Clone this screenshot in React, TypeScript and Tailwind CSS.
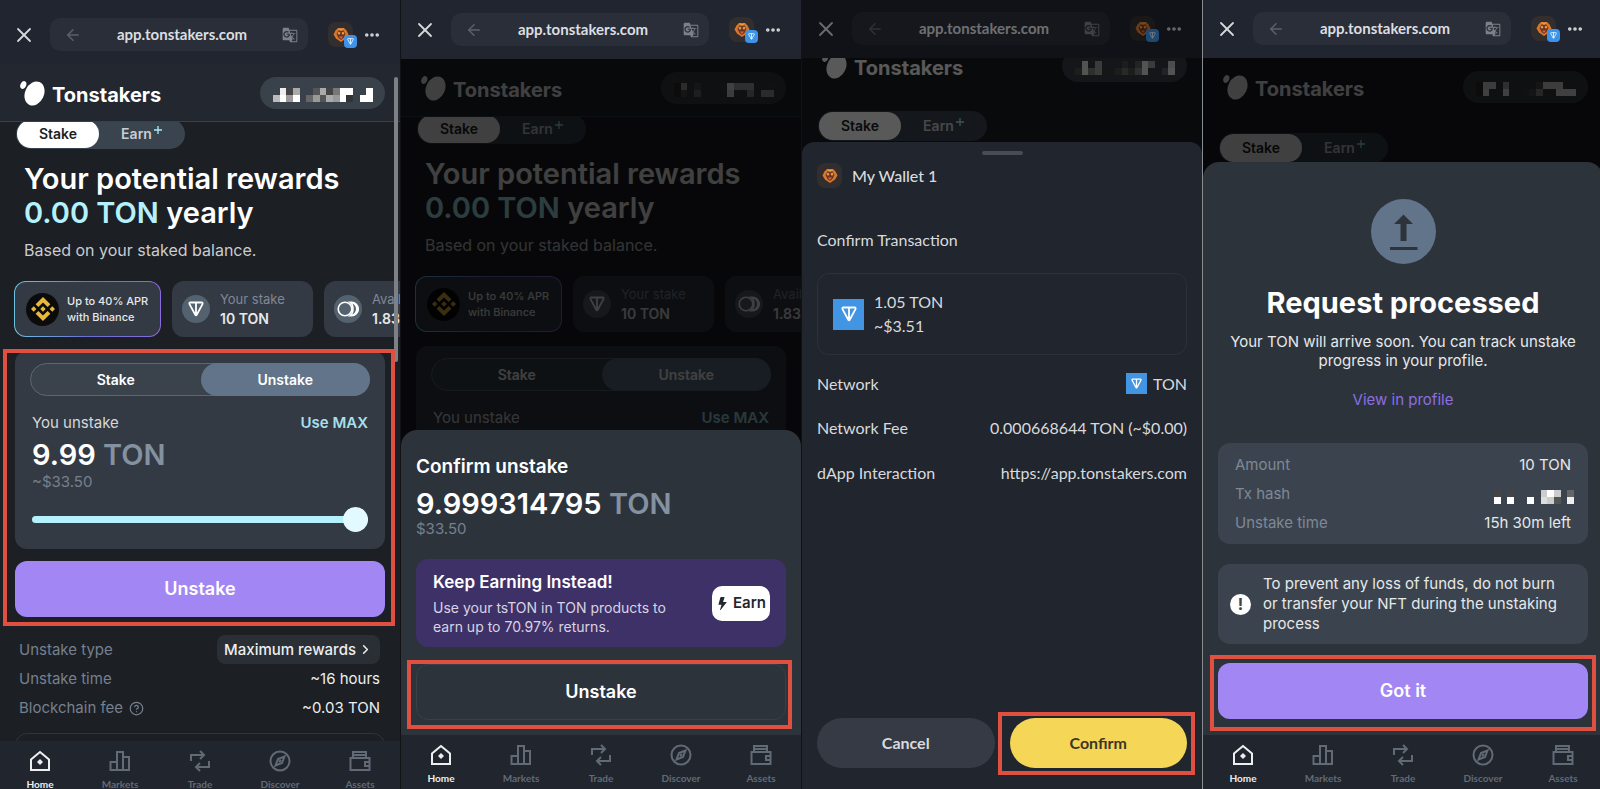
import type { ReactNode } from 'react'
import clsx from 'clsx'
import { ArrowLeft, ChevronRight, CircleHelp, Ellipsis, X } from 'lucide-react'
import { BsLightningFill } from 'react-icons/bs'
import { MdGTranslate } from 'react-icons/md'
import { SiBinance } from 'react-icons/si'

const WALLET_FONT = "font-['Lato',sans-serif]"

const masks = {
  home: ['.e4a..5a47ff..f', 'bf9f.695a9f3.ff'],
  confirm: ['3a.5...4fbbb..4', '35.7....e4.9.aa'],
  sign: ['.e.a...5.6ea..d', '5e8a.45758e..6e'],
  done: ['3ee.b....5eee..', '3f..f..459..fff'],
  hash: ['4.4....cfc.6', 'f.f..f.dc5.e'],
}

// blurred-out address, one hex digit of grey per block
function Mosaic({ rows, className }: { rows: string[]; className?: string }) {
  return (
    <svg
      viewBox={`0 0 ${rows[0].length} 2`}
      className={className}
      shapeRendering="crispEdges"
      aria-hidden="true"
    >
      {rows.map((row, y) =>
        row.split('').map((c, x) =>
          c === '.' ? null : (
            <rect key={`${x}-${y}`} x={x} y={y} width="1" height="1" fill={`#${c}${c}${c}`} />
          )
        )
      )}
    </svg>
  )
}

function TonGlyph({ className }: { className?: string }) {
  return (
    <svg viewBox="0 0 16 16" className={className} fill="none" stroke="currentColor" aria-hidden="true">
      <path
        d="M2.4 1.5h11.2c.9 0 1.3.8.9 1.6L8.6 14c-.3.5-.9.5-1.2 0L1.5 3.1c-.4-.8 0-1.6.9-1.6ZM8 1.5v12.6"
        strokeWidth="1.8"
        strokeLinejoin="round"
      />
    </svg>
  )
}

function Monkey({ className }: { className?: string }) {
  return (
    <span
      className={clsx('relative flex size-[25px] items-center justify-center rounded-lg bg-[#332e2e]', className)}
    >
      <svg viewBox="0 0 16 16" className="size-4" aria-hidden="true">
        <path d="M5 1h6l2.5 2.5 2 4-2.500 4L8 15l-5-3.500L.5 7.500l2-4Z" fill="#d9772f" />
        <path d="M5.500 3.500h5L12.500 7l-2 4L8 13l-2.500-2-2-4Z" fill="#6b3326" />
        <path d="M4.500 6 6 4.500 7.500 6 6 8Zm7 0L10 4.500 8.500 6 10 8Z" fill="#e8a13c" />
        <path d="M6 9.500h4L8 12Z" fill="#e0603a" />
        <path d="M6 1.500 8 3.500l2-2" stroke="#f0c05a" fill="none" />
      </svg>
    </span>
  )
}

function BrowserBar({ className, dim }: { className: string; dim?: boolean }) {
  return (
    <header
      className={clsx('relative flex shrink-0 items-center bg-[#20252f] pr-[19px] pb-[13px] pl-3', WALLET_FONT, className)}
    >
      <button aria-label="Close" className="text-[#d5d7da]">
        <X size={24} strokeWidth={1.8} />
      </button>
      <div className="ml-3.5 flex h-[33px] min-w-0 flex-1 items-center rounded-[10px] bg-[#2a2e38] px-3.5">
        <button aria-label="Back" className="text-[#5b6069]">
          <ArrowLeft size={18} strokeWidth={2} />
        </button>
        <span className="flex-1 truncate text-center text-[15px] font-bold text-[#dcdee0]">app.tonstakers.com</span>
        <button aria-label="Translate" className="-mr-1 text-[#7c8087]">
          <MdGTranslate size={16} />
        </button>
      </div>
      <button aria-label="Wallet" className="relative ml-5">
        <Monkey />
        <span className="absolute -right-1 -bottom-px flex size-[13px] items-center justify-center rounded-[4px] bg-[#3d93e8] text-white">
          <TonGlyph className="size-[7px]" />
        </span>
      </button>
      <button aria-label="More" className="ml-2.5 text-[#d5d7da]">
        <Ellipsis size={18} strokeWidth={2.8} />
      </button>
      {dim && <div className="absolute inset-0 bg-black/50" />}
    </header>
  )
}

function SiteHeader({ mask, className }: { mask: string[]; className?: string }) {
  return (
    <div
      className={clsx(
        'flex h-[58px] shrink-0 items-center border-b border-[#3a3f47] bg-[#23272f] pr-[15px] pl-5',
        className
      )}
    >
      <svg viewBox="0 0 26 26" className="size-[26px]" fill="#fff" aria-hidden="true">
        <ellipse cx="14.500" cy="13.500" rx="9.500" ry="12.500" transform="rotate(24 14.500 13.500)" />
        <ellipse cx="3.300" cy="5" rx="2.800" ry="4" transform="rotate(24 3.300 5)" />
      </svg>
      <span className="ml-1.5 pt-1 text-xl font-bold text-white">Tonstakers</span>
      <button
        aria-label="Account"
        className="ml-auto flex h-[32px] w-[125px] items-center justify-center rounded-full bg-[#39414a]"
      >
        <Mosaic rows={mask} className="mt-1 h-[14px] w-[100px]" />
      </button>
    </div>
  )
}

function ModeTabs({ className }: { className?: string }) {
  return (
    <div className={clsx('ml-4 flex h-[30px] w-[169px] shrink-0 rounded-full bg-[#3a444e] p-px', className)}>
      <button className="w-[82px] rounded-full bg-white text-sm font-semibold text-[#1c1f24]">Stake</button>
      <button className="flex flex-1 items-center justify-center text-sm font-semibold text-[#c9cdd2]">
        Earn
        <svg viewBox="0 0 8 8" className="mb-2 ml-0.5 size-2" stroke="#a8ecfa" strokeWidth="1.300" aria-hidden="true">
          <path d="M4 0v8M0 4h8" />
        </svg>
      </button>
    </div>
  )
}

function StatCard({ icon, label, value }: { icon: ReactNode; label: string; value: string }) {
  return (
    <div className="flex h-14 w-[141px] shrink-0 items-center rounded-xl bg-[#343a43] pl-2.5">
      <span className="flex size-7 items-center justify-center rounded-full bg-[#54616f] text-white">{icon}</span>
      <p className="ml-2.5 text-[13px] leading-[19px] whitespace-nowrap text-[#7f8896]">
        {label}
        <br />
        <span className="text-sm font-semibold text-[#e6e8ea]">{value}</span>
      </p>
    </div>
  )
}

function Highlight({ className }: { className: string }) {
  return <div className={clsx('pointer-events-none absolute border-4 border-[#e05040]', className)} />
}

function PrimaryButton({ children }: { children: ReactNode }) {
  return (
    <button className="block h-14 w-full rounded-xl bg-[#a286f4] text-lg font-semibold text-white">{children}</button>
  )
}

function Dashboard() {
  return (
    <div className="min-h-0 flex-1 overflow-hidden bg-[#1c1f24]">
      <ModeTabs className="-mt-[3px]" />
      <h1 className="mt-[13px] ml-6 text-[29px] leading-[34px] font-semibold text-white">
        Your potential rewards
        <br />
        <span className="text-[#b5f1fc]">0.00 TON</span> yearly
      </h1>
      <p className="mt-2.5 ml-6 text-base leading-5 text-[#c9ccd0]">Based on your staked balance.</p>

      <div className="mt-[21px] flex gap-[11px] pl-3.5">
        <div className="flex h-14 w-[147px] shrink-0 rounded-xl bg-linear-to-r from-[#6fc3e0] via-[#6a6fd0] to-[#8a6be0] p-px">
          <div className="flex flex-1 items-center rounded-[11px] bg-[#343a43] pl-[11px]">
            <span className="flex size-[33px] items-center justify-center rounded-full bg-[#0b0b0c] text-[#e8b93b]">
              <SiBinance size={24} />
            </span>
            <p className="ml-2 text-[11px] leading-4 font-medium whitespace-nowrap text-[#e6e8ea]">
              Up to 40% APR
              <br />
              with Binance
            </p>
          </div>
        </div>
        <StatCard icon={<TonGlyph className="size-4" />} label="Your stake" value="10 TON" />
        <StatCard
          icon={
            <svg viewBox="0 0 22 16" className="h-4 w-[22px]" fill="none" stroke="#fff" strokeWidth="1.600" aria-hidden="true">
              <circle cx="8" cy="8" r="6.800" />
              <path d="M13 1.200a6.800 6.800 0 0 1 0 13.600c2-1.500 3-4 3-6.800s-1-5.300-3-6.800ZM13 1.200h1.500a6.800 6.800 0 0 1 0 13.600H13" />
            </svg>
          }
          label="Available"
          value="1.83 TON"
        />
      </div>

      <div className="relative mx-[15px] mt-3.5">
        <section className="rounded-xl bg-[#343a43] px-[15px] pt-3 pb-[17px]">
          <div className="flex h-[33px] rounded-full border border-[#5a6876] bg-[#3a434c] text-sm font-semibold text-white">
            <button className="flex-1">Stake</button>
            <button className="-my-px -mr-px flex-1 rounded-full bg-[#62748a]">Unstake</button>
          </div>
          <div className="mt-[17px] flex justify-between px-0.5 text-[15px] leading-5">
            <label htmlFor="amount" className="text-[#d5d8db]">
              You unstake
            </label>
            <button className="font-semibold text-[#a9dfec]">Use MAX</button>
          </div>
          <p className="mt-[5px] px-0.5 text-[29px] leading-[34px] font-semibold text-white">
            9.99 <span className="text-[#8391a0]">TON</span>
          </p>
          <p className="px-0.5 text-[15px] leading-5 text-[#76808e]">~$33.50</p>
          <div className="mt-[15px] px-0.5">
            <input
              id="amount"
              type="range"
              defaultValue={100}
              className="block h-[25px] w-full appearance-none bg-transparent [&::-webkit-slider-runnable-track]:h-[7px] [&::-webkit-slider-runnable-track]:rounded-full [&::-webkit-slider-runnable-track]:bg-[#b5f1fc] [&::-webkit-slider-thumb]:-mt-[9px] [&::-webkit-slider-thumb]:size-[25px] [&::-webkit-slider-thumb]:appearance-none [&::-webkit-slider-thumb]:rounded-full [&::-webkit-slider-thumb]:bg-[#e2faff]"
            />
          </div>
        </section>
        <div className="mt-3">
          <PrimaryButton>Unstake</PrimaryButton>
        </div>
      </div>

      <dl className="mr-5 ml-[19px] mt-[18px] text-[15px] leading-5 text-[#eceef0]">
        <div className="flex items-center justify-between">
          <dt className="text-[#76808e]">Unstake type</dt>
          <dd>
            <button className="flex h-[29px] items-center gap-0.5 rounded-lg bg-[#2a2e35] px-[7px] font-medium">
              Maximum rewards
              <ChevronRight size={15} strokeWidth={2.5} />
            </button>
          </dd>
        </div>
        <div className="mt-[5px] flex justify-between">
          <dt className="text-[#76808e]">Unstake time</dt>
          <dd>~16 hours</dd>
        </div>
        <div className="mt-[9px] flex justify-between">
          <dt className="flex items-center gap-1.5 text-[#76808e]">
            Blockchain fee <CircleHelp size={15} />
          </dt>
          <dd>~0.03 TON</dd>
        </div>
      </dl>
      <div className="mx-[15px] mt-[15px] h-14 rounded-xl border border-[#31353b]" />
    </div>
  )
}

const tabs = [
  {
    label: 'Home',
    icon: (
      <>
        <path d="M11 2 2 9.500V20h18V9.500Z" />
        <path d="m11 9 3 3-3 3-3-3Z" fill="currentColor" stroke="none" />
      </>
    ),
  },
  { label: 'Markets', icon: <path d="M1.500 12H8v8H1.500ZM8 2h6v18H8ZM14 7h6v13h-6Z" /> },
  { label: 'Trade', icon: <path d="M2 11V5h12M11 1l4 4-4 4M20 11v6H8M11 13l-4 4 4 4" /> },
  {
    label: 'Discover',
    icon: (
      <>
        <circle cx="11" cy="11" r="9.500" />
        <path d="M15.500 6.500 13 13l-6.500 2.500L9 9ZM10 12l2-2" />
      </>
    ),
  },
  {
    label: 'Assets',
    icon: <path d="M1.500 8h19v12h-19ZM4 8V2h13v6M4 5h13M20.500 12H16v4h4.500" />,
  },
]

function TabBar({ className }: { className?: string }) {
  return (
    <nav className={clsx('grid shrink-0 grid-cols-5 overflow-hidden bg-[#20252e]', WALLET_FONT, className)}>
      {tabs.map((tab, i) => (
        <button
          key={tab.label}
          className={clsx('flex flex-col items-center pt-[9px]', i === 0 ? 'text-[#eceef0]' : 'text-[#626a76]')}
        >
          <svg
            viewBox="0 0 22 22"
            className="size-[22px] shrink-0"
            fill="none"
            stroke="currentColor"
            strokeWidth="2"
            aria-hidden="true"
          >
            {tab.icon}
          </svg>
          <span className="mt-1.5 text-[10px] leading-3 font-bold">{tab.label}</span>
        </button>
      ))}
    </nav>
  )
}

function Panel({ children, className }: { children: ReactNode; className?: string }) {
  return (
    <section className={clsx('relative flex h-screen min-w-0 flex-col overflow-hidden bg-[#1c1f24]', className)}>
      {children}
    </section>
  )
}

function Webview({ children }: { children: ReactNode }) {
  return <div className="relative flex min-h-0 flex-1 flex-col overflow-hidden">{children}</div>
}

function ConfirmUnstakeSheet() {
  return (
    <div className="relative -mt-4 shrink-0 rounded-t-2xl bg-[#2d333b] px-[15px] pt-[25px] pb-[15px]">
      <h2 className="text-[19px] leading-6 font-semibold text-white">Confirm unstake</h2>
      <p className="mt-2 text-[29px] leading-[34px] font-semibold text-white">
        9.999314795 <span className="text-[#8391a0]">TON</span>
      </p>
      <p className="text-[15px] leading-4 text-[#76808e]">$33.50</p>
      <div className="mt-[22px] flex h-[88px] items-center justify-between rounded-xl bg-[#3e3168] pr-4 pl-[17px]">
        <div>
          <h3 className="text-[17px] leading-6 font-semibold text-white">Keep Earning Instead!</h3>
          <p className="mt-1 text-sm leading-[19px] whitespace-nowrap text-[#d8d5e2]">
            Use your tsTON in TON products to
            <br />
            earn up to 70.97% returns.
          </p>
        </div>
        <button className="flex h-[35px] w-[58px] items-center justify-center gap-1 rounded-[10px] bg-white text-[15px] font-semibold text-[#24272c]">
          <BsLightningFill size={13} className="shrink-0" />
          Earn
        </button>
      </div>
      <div className="relative mt-[17px]">
        <button className="h-14 w-full rounded-xl border border-[#3a4049] text-lg font-semibold text-white">
          Unstake
        </button>
        <Highlight className="-top-1 -right-1.5 -bottom-[9px] -left-[9px]" />
      </div>
    </div>
  )
}

function TonSquare({ className, glyph }: { className: string; glyph: string }) {
  return (
    <span className={clsx('flex items-center justify-center bg-[#4195e3] text-white', className)}>
      <TonGlyph className={glyph} />
    </span>
  )
}

function SignSheet() {
  return (
    <div
      className={clsx(
        'absolute inset-x-0 top-[84px] bottom-0 flex flex-col rounded-t-xl bg-[#20252e] px-[15px] pt-[9px] pb-[21px] text-base leading-5 text-[#d8dadd]',
        WALLET_FONT
      )}
    >
      <div className="mx-auto h-1 w-[41px] rounded-full bg-[#484c55]" />
      <div className="mt-2 flex items-center gap-2.5 font-medium">
        <Monkey />
        My Wallet 1
      </div>
      <h2 className="mt-[42px]">Confirm Transaction</h2>
      <div className="mt-[23px] flex h-[82px] items-center rounded-xl border border-[#2e3135] px-[15px]">
        <TonSquare className="size-[31px]" glyph="size-4" />
        <p className="ml-2.5 leading-6">
          1.05 TON
          <br />
          ~$3.51
        </p>
      </div>
      <dl>
        <div className="mt-[18px] flex items-center justify-between">
          <dt>Network</dt>
          <dd className="flex items-center gap-1.5">
            <TonSquare className="size-[21px]" glyph="size-[11px]" />
            TON
          </dd>
        </div>
        <div className="mt-6 flex justify-between">
          <dt>Network Fee</dt>
          <dd>0.000668644 TON (~$0.00)</dd>
        </div>
        <div className="mt-[25px] flex justify-between">
          <dt>dApp Interaction</dt>
          <dd>https://app.tonstakers.com</dd>
        </div>
      </dl>
      <div className="mt-auto grid grid-cols-2 gap-[15px] font-bold">
        <button className="h-[50px] rounded-full bg-[#353a45]">Cancel</button>
        <div className="relative">
          <button className="h-[50px] w-full rounded-full bg-[#f5d657] text-[#3b3628]">Confirm</button>
          <Highlight className="-top-1.5 -right-2 -bottom-[7px] -left-3" />
        </div>
      </div>
    </div>
  )
}

function ProcessedSheet() {
  return (
    <div className="absolute inset-x-0 bottom-0 rounded-t-2xl bg-[#2d333b] px-[15px] pt-[37px] pb-4 text-center text-[15px] leading-5 text-[#e6e8ea]">
      <svg viewBox="0 0 65 65" className="mx-auto size-[65px]" aria-hidden="true">
        <circle cx="32.500" cy="32.500" r="32.500" fill="#62748a" />
        <path d="M32.500 15.500 42 25h-6.500v17h-6V25H23ZM19 48h27.500v3H19Z" fill="#2d333b" />
      </svg>
      <h2 className="mt-[22px] text-[29px] leading-[34px] font-bold text-white">Request processed</h2>
      <p className="mt-3 leading-[19px]">
        Your TON will arrive soon. You can track unstake
        <br />
        progress in your profile.
      </p>
      <a href="#profile" className="mt-5 block text-[#8b6fe0]">
        View in profile
      </a>
      <dl className="mt-[33px] flex flex-col gap-[9px] rounded-xl bg-[#3b444e] px-[17px] pt-3 pb-[11px]">
        <div className="flex justify-between">
          <dt className="text-[#7f8896]">Amount</dt>
          <dd>10 TON</dd>
        </div>
        <div className="flex items-center justify-between">
          <dt className="text-[#7f8896]">Tx hash</dt>
          <dd>
            <Mosaic rows={masks.hash} className="-mr-[3px] mt-1.5 h-[14px] w-20" />
          </dd>
        </div>
        <div className="flex justify-between">
          <dt className="text-[#7f8896]">Unstake time</dt>
          <dd>15h 30m left</dd>
        </div>
      </dl>
      <div className="mt-5 flex items-center rounded-xl bg-[#3b444e] py-2.5 pl-3 text-left">
        <span className="flex size-[21px] shrink-0 items-center justify-center rounded-full bg-white text-base font-bold text-[#3b444e]">
          !
        </span>
        <p className="ml-3">
          To prevent any loss of funds, do not burn
          <br />
          or transfer your NFT during the unstaking
          <br />
          process
        </p>
      </div>
      <div className="relative mt-[19px]">
        <PrimaryButton>Got it</PrimaryButton>
        <Highlight className="-inset-x-2 -top-2 -bottom-3" />
      </div>
    </div>
  )
}

export default function App() {
  return (
    <div className="overflow-hidden bg-[#101216] font-['Inter',sans-serif]">
      <main className="-mr-[3px] grid grid-cols-4 gap-x-px">
        <Panel>
          <BrowserBar className="pt-[18px]" />
          <Webview>
            <SiteHeader mask={masks.home} />
            <Dashboard />
            <div className="absolute top-[13px] right-0.5 h-[285px] w-1 rounded-full bg-[#7d8085]" />
            <Highlight className="top-[285px] right-[5px] left-[3px] h-[277px]" />
          </Webview>
          <TabBar className="h-12" />
        </Panel>

        <Panel>
          <BrowserBar className="pt-[13px]" />
          <Webview>
            <SiteHeader mask={masks.confirm} />
            <Dashboard />
            <div className="absolute inset-0 bg-black/75" />
            <ConfirmUnstakeSheet />
          </Webview>
          <TabBar className="h-[54px]" />
        </Panel>

        <Panel>
          <BrowserBar className="pt-3" dim />
          <Webview>
            <SiteHeader mask={masks.sign} className="-mt-[21px] border-transparent bg-transparent" />
            <ModeTabs className="mt-4" />
            <div className="absolute inset-0 bg-black/65" />
            <SignSheet />
          </Webview>
        </Panel>

        <Panel className="shadow-[-1px_0_0_#8a8d90]">
          <BrowserBar className="pt-3" />
          <Webview>
            <SiteHeader mask={masks.done} className="border-transparent bg-transparent" />
            <ModeTabs className="mt-[17px]" />
            <div className="absolute inset-0 bg-black/75" />
            <ProcessedSheet />
          </Webview>
          <TabBar className="h-[54px]" />
        </Panel>
      </main>
    </div>
  )
}
